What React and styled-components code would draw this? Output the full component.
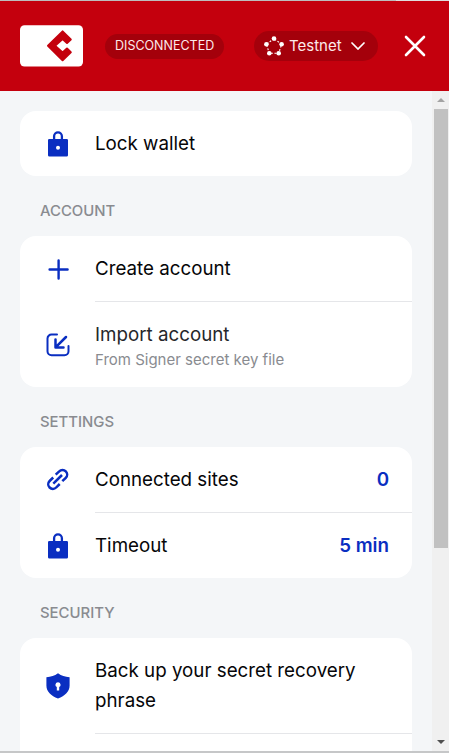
import React from 'react';
import styled, { createGlobalStyle } from 'styled-components';

const GlobalStyle = createGlobalStyle`
  *, *::before, *::after { box-sizing: border-box; }
  body {
    margin: 0;
    overflow: hidden;
    font-family: Inter, "Liberation Sans", sans-serif;
    -webkit-font-smoothing: antialiased;
  }
  svg { display: block; flex: none; }
`;

const Popup = styled.div`
  display: flex;
  flex-direction: column;
  width: 449px;
  height: 753px;
  overflow: hidden;
  background: #f4f6f8;
  border-bottom: 2px solid #c6c7c8;
`;

const WindowEdge = styled.div`
  flex: none;
  height: 1px;
  background: linear-gradient(to right, #bdbdbd 396px, #dedede 396px);
`;

const Header = styled.header`
  flex: none;
  display: flex;
  align-items: center;
  height: 90px;
  padding: 0 23px 0 20px;
  background: #c4000d;
  color: #fff;
`;

const Logo = styled.svg`
  width: 63px;
  height: 42px;
`;

const Pill = styled.div`
  display: flex;
  align-items: center;
  height: ${({ $height }) => $height}px;
  width: ${({ $width }) => $width}px;
  margin-left: ${({ $gap }) => $gap}px;
  padding-left: ${({ $inset }) => $inset}px;
  border-radius: 15px;
  background: #a4000b;
  font-size: ${({ $size }) => $size}px;
  white-space: nowrap;
  color: #fde9ea;
`;

const PillText = styled.span`
  width: 54px;
  margin: 0 8px 1px 5px;
`;

const StatusText = styled.span`
  margin-bottom: 1px;
`;

const CloseButton = styled.button`
  display: flex;
  margin: 0 0 0 auto;
  padding: 0;
  border: 0;
  background: none;
  color: #fff;
`;

const Body = styled.div`
  flex: 1;
  min-height: 0;
  display: flex;
`;

const Content = styled.main`
  flex: 1;
  overflow: hidden;
  padding: 20px 20px 0;
`;

const SectionTitle = styled.h2`
  margin: 0;
  padding: 23px 20px 13px;
  font-size: 14.9px;
  line-height: 24px;
  font-weight: 500;
  color: #898b90;
`;

const Card = styled.section`
  overflow: hidden;
  border-radius: 16px;
  background: #fff;
`;

const Row = styled.div`
  display: flex;
  align-items: center;
  height: ${({ $height }) => $height || 65}px;
  padding: 0 23px;
`;

const Divider = styled.div`
  height: 1px;
  margin-left: 75px;
  background: #e5e6e9;
`;

const RowIcon = styled.svg`
  width: 30px;
  height: 31px;
  margin-right: 22px;
  color: #0a2ec1;
`;

const RowText = styled.div`
  flex: 1;
`;

const Title = styled.div`
  font-size: 18.75px;
  line-height: 30px;
  color: ${({ $soft }) => ($soft ? '#26272b' : '#060608')};
`;

const Subtitle = styled.div`
  font-size: 15px;
  line-height: 20px;
  color: #898b90;
`;

const Value = styled.div`
  font-size: 18.75px;
  font-weight: 600;
  color: #0a2ec1;
`;

const Scrollbar = styled.div`
  flex: none;
  display: flex;
  flex-direction: column;
  width: 17px;
  padding: 0 1px 0 2px;
  background: #f0f0f0;
`;

const ScrollArrow = styled.div`
  display: flex;
  align-items: center;
  justify-content: center;
  height: 18px;
`;

const ScrollTrack = styled.div`
  flex: 1;
`;

const ScrollThumb = styled.div`
  height: 439px;
  background: #c1c1c1;
`;

const LockIcon = () => (
  <RowIcon viewBox="0 0 30 31">
    <path d="M11.1 12V8.3a3.9 3.9 0 0 1 7.8 0V12" fill="none" stroke="currentColor" strokeWidth="2.3" />
    <path
      fillRule="evenodd"
      fill="currentColor"
      d="M6.2 11h17.6A1.2 1.2 0 0 1 25 12.2v15a1.4 1.4 0 0 1-1.4 1.4H6.4A1.4 1.4 0 0 1 5 27.2v-15A1.2 1.2 0 0 1 6.2 11zM15 17.7a2 2 0 1 0 0 4 2 2 0 0 0 0-4z"
    />
  </RowIcon>
);

const PlusIcon = () => (
  <RowIcon viewBox="0 0 30 31" stroke="currentColor" strokeWidth="2.4" strokeLinecap="round">
    <path d="M15.6 7.5v18M6.6 16.5h18" />
  </RowIcon>
);

const ImportIcon = () => (
  <RowIcon viewBox="0 0 30 31" fill="none" stroke="currentColor" strokeLinecap="round" strokeLinejoin="round">
    <path d="M14 5.5H8.5a4 4 0 0 0-4 4V22.3a4 4 0 0 0 4 4H21.5a4 4 0 0 0 4-4V17" strokeWidth="2" />
    <path d="M23 8L12.8 18.2M12.5 10.5v8h8" strokeWidth="2.5" />
  </RowIcon>
);

const LinkIcon = () => (
  <RowIcon viewBox="0 0 30 31" fill="none" stroke="currentColor" strokeWidth="2.5">
    <path d="M10.3 19.7L19 11" />
    <path d="M12.7 10.6L16.2 7.3a4.6 4.6 0 0 1 6.6 0 4.6 4.6 0 0 1 0 6.5L19.3 17.2" />
    <path d="M10.2 13.5L6.6 17a4.6 4.6 0 0 0 0 6.5 4.6 4.6 0 0 0 6.6 0L16.7 20" />
  </RowIcon>
);

const ShieldIcon = () => (
  <RowIcon viewBox="0 0 30 31">
    <path
      fill="currentColor"
      d="M15 3.3C18.5 5.8 22 7 26.6 7.3V15.5C26.6 21.5 22 26 15 28.4 8 26 3.4 21.5 3.4 15.5V7.3C8 7 11.5 5.8 15 3.3Z"
    />
    <path fill="#fff" d="M15 12.2a2.6 2.6 0 0 0-1.2 4.9v3.5h2.4v-3.5a2.6 2.6 0 0 0-1.2-4.9z" />
  </RowIcon>
);

const NETWORK_NODES = [
  [10, 2.6],
  [17.6, 8.3],
  [14.7, 17.2],
  [5.3, 17.2],
  [2.4, 8.3],
];

const NetworkIcon = () => (
  <svg width="20" height="20" viewBox="0 0 20 20" fill="#fff">
    <polygon
      points={NETWORK_NODES.map((p) => p.join(',')).join(' ')}
      fill="none"
      stroke="#fff"
      strokeWidth="1.1"
      strokeDasharray="1.8 1.6"
      strokeDashoffset="-.9"
    />
    {NETWORK_NODES.map(([cx, cy]) => (
      <circle key={`${cx}-${cy}`} cx={cx} cy={cy} r="2.3" />
    ))}
  </svg>
);

export default function App() {
  return (
    <>
      <GlobalStyle />
      <Popup>
        <WindowEdge />
        <Header>
          <Logo viewBox="0 0 63 42">
            <rect y="0.3" width="63" height="41.2" rx="4.5" fill="#fff" />
            <path
              d="M42.6 6.4L50.8 14.4 47 18 42.6 14 35 20.8 42.6 27.6 47 23.6 50.8 27.2 42.6 35.2 28 20.8Z"
              fill="#c4000d"
              stroke="#c4000d"
              strokeWidth="2"
              strokeLinejoin="round"
            />
          </Logo>
          <Pill $height={25} $width={119} $gap={22} $inset={10} $size={12.5}>
            <StatusText>DISCONNECTED</StatusText>
          </Pill>
          <Pill $height={30} $width={124} $gap={30} $inset={10} $size={15}>
            <NetworkIcon />
            <PillText>Testnet</PillText>
            <svg width="14" height="8" viewBox="0 0 14 8" fill="none" stroke="#fff" strokeWidth="1.7" strokeLinecap="round">
              <path d="M1 1L7 7L13 1" />
            </svg>
          </Pill>
          <CloseButton aria-label="Close">
            <svg width="22" height="22" viewBox="0 0 22 22" stroke="currentColor" strokeWidth="2.6" strokeLinecap="round">
              <path d="M2 2L20 20M20 2L2 20" />
            </svg>
          </CloseButton>
        </Header>
        <Body>
          <Content>
            <Card>
              <Row>
                <LockIcon />
                <RowText><Title>Lock wallet</Title></RowText>
              </Row>
            </Card>
            <SectionTitle>ACCOUNT</SectionTitle>
            <Card>
              <Row>
                <PlusIcon />
                <RowText><Title>Create account</Title></RowText>
              </Row>
              <Divider />
              <Row $height={85}>
                <ImportIcon />
                <RowText>
                  <Title $soft>Import account</Title>
                  <Subtitle>From Signer secret key file</Subtitle>
                </RowText>
              </Row>
            </Card>
            <SectionTitle>SETTINGS</SectionTitle>
            <Card>
              <Row>
                <LinkIcon />
                <RowText><Title>Connected sites</Title></RowText>
                <Value>0</Value>
              </Row>
              <Divider />
              <Row>
                <LockIcon />
                <RowText><Title>Timeout</Title></RowText>
                <Value>5 min</Value>
              </Row>
            </Card>
            <SectionTitle>SECURITY</SectionTitle>
            <Card>
              <Row $height={95}>
                <ShieldIcon />
                <RowText><Title>Back up your secret recovery phrase</Title></RowText>
              </Row>
              <Divider />
              <Row />
            </Card>
          </Content>
          <Scrollbar>
            <ScrollArrow>
              <svg width="8" height="4" viewBox="0 0 8 4" fill="#a3a3a3"><path d="M4 0L8 4H0Z" /></svg>
            </ScrollArrow>
            <ScrollTrack><ScrollThumb /></ScrollTrack>
            <ScrollArrow>
              <svg width="8" height="4" viewBox="0 0 8 4" fill="#505050"><path d="M0 0H8L4 4Z" /></svg>
            </ScrollArrow>
          </Scrollbar>
        </Body>
      </Popup>
    </>
  );
}
